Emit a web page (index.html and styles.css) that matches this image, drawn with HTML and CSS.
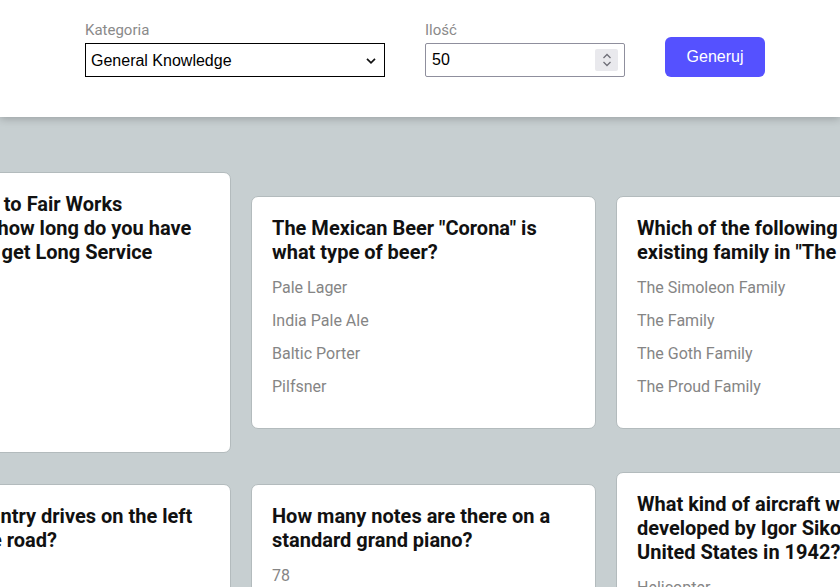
FILE: index.html
```html
<!DOCTYPE html>
<html lang="pl">
<head>
<meta charset="utf-8">
<title>Quiz</title>
<link rel="stylesheet" href="styles.css">
</head>
<body>
<header class="topbar">
  <form class="controls">
    <div class="field field-category">
      <label class="field-label" for="cat">Kategoria</label>
      <div class="select-wrap">
        <select id="cat" class="select">
          <option>General Knowledge</option>
        </select>
        <svg class="select-chevron" width="12" height="8" viewBox="0 0 12 8"><path d="M2 1.8 L6 5.8 L10 1.8" fill="none" stroke="#111" stroke-width="1.7"/></svg>
      </div>
    </div>
    <div class="field field-qty">
      <label class="field-label" for="qty">Ilość</label>
      <div class="number-wrap">
        <input id="qty" class="number" type="text" value="50">
        <span class="spinner">
          <svg width="10" height="16" viewBox="0 0 10 16"><path d="M1.5 6 L5 2.5 L8.5 6" fill="none" stroke="#6f6f78" stroke-width="1.3"/><path d="M1.5 10 L5 13.5 L8.5 10" fill="none" stroke="#6f6f78" stroke-width="1.3"/></svg>
        </span>
      </div>
    </div>
    <button type="button" class="btn">Generuj</button>
  </form>
</header>

<main class="board">
  <article class="card">
    <h2 class="card-title">According to Fair Works Australia, how long do you have to work to get Long Service Leave?</h2>
    <ul class="answers">
      <li>5 years</li><li>7 years</li><li>10 years</li><li>2 years</li>
    </ul>
  </article>
  <article class="card">
    <h2 class="card-title">The Mexican Beer "Corona" is what type of beer?</h2>
    <ul class="answers">
      <li>Pale Lager</li><li>India Pale Ale</li><li>Baltic Porter</li><li>Pilfsner</li>
    </ul>
  </article>
  <article class="card">
    <h2 class="card-title">Which of the following is not an existing family in "The Sims"?</h2>
    <ul class="answers">
      <li>The Simoleon Family</li><li>The Family</li><li>The Goth Family</li><li>The Proud Family</li>
    </ul>
  </article>
  <article class="card">
    <h2 class="card-title">Which country drives on the left side of the road?</h2>
    <ul class="answers">
      <li>Japan</li><li>Germany</li><li>Russia</li><li>China</li>
    </ul>
  </article>
  <article class="card">
    <h2 class="card-title">How many notes are there on a standard grand piano?</h2>
    <ul class="answers">
      <li>78</li><li>88</li><li>66</li><li>96</li>
    </ul>
  </article>
  <article class="card">
    <h2 class="card-title">What kind of aircraft was developed by Igor Sikorsky in the United States in 1942?</h2>
    <ul class="answers">
      <li>Helicopter</li><li>Stealth Blimp</li><li>Jet</li><li>Glider</li>
    </ul>
  </article>
</main>
</body>
</html>
```
FILE: styles.css
```css
html, body {
  margin: 0;
  padding: 0;
}
body {
  font-family: Roboto, "Liberation Sans", sans-serif;
  background: #c7cfd1;
  overflow: hidden;
  height: 587px;
}

.topbar {
  position: relative;
  z-index: 2;
  background: #ffffff;
  height: 117px;
  box-sizing: border-box;
  padding: 21px 0 0 85px;
  box-shadow: 0 2px 8px rgba(0, 0, 0, 0.22);
}
.controls {
  display: flex;
  align-items: flex-end;
  gap: 40px;
  margin: 0;
}
.field {
  display: flex;
  flex-direction: column;
}
.field-label {
  font-size: 15px;
  line-height: 18px;
  color: #8a8a8a;
  margin-bottom: 4px;
}
.select-wrap {
  position: relative;
  width: 300px;
}
.select {
  appearance: none;
  -webkit-appearance: none;
  width: 300px;
  height: 34px;
  box-sizing: border-box;
  border: 1px solid #000;
  border-radius: 0;
  background: #fff;
  font-family: "Liberation Sans", Arial, sans-serif;
  font-size: 16px;
  color: #000;
  padding: 0 24px 0 5px;
  margin: 0;
  display: block;
}
.select-chevron {
  position: absolute;
  right: 8px;
  top: 14px;
}
.number-wrap {
  position: relative;
  width: 200px;
}
.number {
  display: block;
  width: 200px;
  height: 34px;
  box-sizing: border-box;
  border: 1px solid #8f8f9d;
  border-radius: 2px;
  padding: 0 30px 0 6px;
  margin: 0;
  font-family: "Liberation Sans", Arial, sans-serif;
  font-size: 16px;
  color: #000;
  background: #fff;
}
.spinner {
  position: absolute;
  right: 7px;
  top: 6px;
  width: 23px;
  height: 22px;
  background: #e9e9ed;
  border-radius: 2px;
  display: flex;
  align-items: center;
  justify-content: center;
}
.btn {
  width: 100px;
  height: 40px;
  border: none;
  border-radius: 6px;
  background: #5551ff;
  color: #fff;
  font-family: "Liberation Sans", Arial, sans-serif;
  font-size: 16px;
  padding: 0;
  cursor: pointer;
}

.board {
  display: grid;
  grid-template-columns: repeat(3, 345px);
  justify-content: center;
  align-items: center;
  column-gap: 20px;
  row-gap: 19px;
  padding: 55px 0 0 7px;
}
.card {
  background: #fff;
  border: 1px solid #b3bbbd;
  border-radius: 7px;
  padding: 19px 18px 19px 20px;
  box-sizing: border-box;
}
.card-title {
  margin: 0;
  font-size: 20px;
  line-height: 24px;
  font-weight: 700;
  color: #111;
}
.answers {
  list-style: none;
  margin: 0;
  padding: 14px 0 12px;
  display: flex;
  flex-direction: column;
  gap: 13px;
}
.answers li {
  font-size: 16px;
  line-height: 20px;
  color: #858585;
}
```
